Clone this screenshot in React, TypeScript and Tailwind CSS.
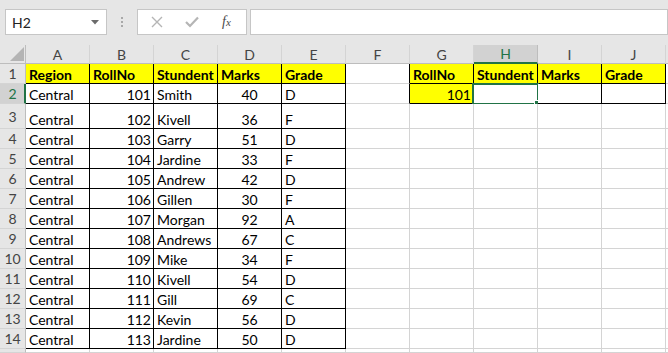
import React from "react";

const COLS = ["A", "B", "C", "D", "E", "F", "G", "H", "I", "J"];
const names = ["Smith", "Kivell", "Garry", "Jardine", "Andrew", "Gillen", "Morgan", "Andrews", "Mike", "Kivell", "Gill", "Kevin", "Jardine"];
const marks = [40, 36, 51, 33, 42, 30, 92, 67, 34, 54, 69, 56, 50];
const grades = ["D", "F", "D", "F", "D", "F", "A", "C", "F", "D", "C", "D", "D"];

type CellData = { text: string; align: "left" | "right" | "center"; bold?: boolean; fill?: string };

function getCell(row: number, col: number): CellData | null {
  if (row === 1) {
    const h: Record<number, string> = { 0: "Region", 1: "RollNo", 2: "Stundent", 3: "Marks", 4: "Grade", 6: "RollNo", 7: "Stundent", 8: "Marks", 9: "Grade" };
    if (h[col] !== undefined) return { text: h[col], align: "left", bold: true, fill: "yellow" };
    return null;
  }
  if (row === 2 && col === 6) return { text: "101", align: "right", fill: "yellow" };
  if (row >= 2 && row <= 14) {
    const i = row - 2;
    if (col === 0) return { text: "Central", align: "left" };
    if (col === 1) return { text: String(101 + i), align: "right" };
    if (col === 2) return { text: names[i], align: "left" };
    if (col === 3) return { text: String(marks[i]), align: "center" };
    if (col === 4) return { text: grades[i], align: "left" };
  }
  return null;
}

function rightBlack(row: number, col: number) {
  if (row >= 1 && row <= 14 && col <= 4) return true;
  if (row >= 1 && row <= 2 && col >= 5 && col <= 9) return true;
  return false;
}
function bottomBlack(row: number, col: number) {
  if (row >= 1 && row <= 14 && col <= 4) return true;
  if (row >= 1 && row <= 2 && col >= 6 && col <= 9) return true;
  return false;
}

export default function App() {
  const rows = Array.from({ length: 15 }, (_, i) => i + 1);
  return (
    <div className="w-[668px] h-[353px] overflow-hidden bg-white relative" style={{ fontFamily: "Lato, 'Liberation Sans', sans-serif" }}>
      {/* formula bar */}
      <div className="h-[45px] bg-[#e6e6e6] flex items-start pt-[9px]">
        <div className="ml-[5px] w-[102px] h-[26px] bg-white border border-[#c6c6c6] flex items-center justify-between pl-[6px] pr-[7px]">
          <span className="text-[14px] text-[#222]">H2</span>
          <svg width="8" height="5" viewBox="0 0 8 5"><path d="M0 0 L8 0 L4 4.5 Z" fill="#6b6b6b" /></svg>
        </div>
        <div className="w-[30px] h-[26px] flex flex-col items-center justify-center gap-[2px]">
          <div className="w-[2px] h-[2px] bg-[#a8a8a8]" />
          <div className="w-[2px] h-[2px] bg-[#a8a8a8]" />
          <div className="w-[2px] h-[2px] bg-[#a8a8a8]" />
        </div>
        <div className="w-[110px] h-[26px] bg-white border border-[#c6c6c6] flex items-center">
          <svg width="12" height="12" viewBox="0 0 12 12" className="ml-[13px]"><path d="M1 1 L11 11 M11 1 L1 11" stroke="#b5b5b5" strokeWidth="1.4" /></svg>
          <svg width="14" height="12" viewBox="0 0 14 12" className="ml-[22px]"><path d="M1 6 L5 10 L13 1.5" stroke="#b5b5b5" strokeWidth="2.2" fill="none" /></svg>
          <span className="ml-[23px] text-[14px] italic text-[#4a4a4a] leading-none" style={{ fontFamily: "'Liberation Serif', serif" }}>f<span className="text-[11px]">x</span></span>
        </div>
        <div className="ml-[3px] flex-1 h-[26px] bg-white border border-[#c6c6c6]" />
      </div>
      {/* grid */}
      <div className="grid grid-cols-[26px_repeat(10,64px)_1fr] grid-rows-[19px_20px_20px_25px_repeat(11,20px)_1fr] h-[308px] text-[14px] leading-none">
        {/* corner */}
        <div className="bg-[#e6e6e6] border-r border-b border-[#bdbdbd] relative">
          <svg width="14" height="14" viewBox="0 0 14 14" className="absolute left-[10px] top-[2px]"><path d="M14 0 L14 14 L0 14 Z" fill="#b4b4b4" /></svg>
        </div>
        {COLS.map((c) => {
          const sel = c === "H";
          return (
            <div
              key={c}
              className={`flex items-center justify-center border-r ${sel ? "bg-[#d2d2d2] text-[#217346] border-b-2 border-b-[#217346] border-r-[#bdbdbd]" : "bg-[#e6e6e6] text-[#444] border-b border-b-[#bdbdbd] border-r-[#d4d4d4]"}`}
            >
              <span className="pt-[1px]">{c}</span>
            </div>
          );
        })}
        <div className="bg-[#e6e6e6] border-b border-[#bdbdbd]" />
        {rows.map((r) => (
          <React.Fragment key={r}>
            <div
              className={`flex items-center justify-center border-b border-b-[#d4d4d4] ${r === 2 ? "bg-[#d2d2d2] text-[#217346] border-r-2 border-r-[#217346]" : "bg-[#e6e6e6] text-[#444] border-r border-r-[#bdbdbd]"}`}
            >
              {r <= 14 && <span className={r === 2 ? "pl-[1px] pt-[1px]" : "pt-[1px]"}>{r}</span>}
            </div>
            {COLS.map((c, ci) => {
              const d = getCell(r, ci);
              const rb = rightBlack(r, ci);
              const bb = bottomBlack(r, ci);
              const isSel = r === 2 && c === "H";
              return (
                <div
                  key={c}
                  className={`relative flex items-end pb-[1px] whitespace-nowrap overflow-visible border-r border-b ${rb ? "border-r-black" : "border-r-[#d4d4d4]"} ${bb ? "border-b-black" : "border-b-[#d4d4d4]"} ${d?.fill === "yellow" ? "bg-[#ffff00]" : "bg-white"} ${d?.align === "right" ? "justify-end pr-[2px]" : d?.align === "center" ? "justify-center" : "justify-start pl-[3px]"} ${d?.bold ? "font-bold" : ""} text-black`}
                >
                  {d?.text}
                  {isSel && (
                    <>
                      <div className="absolute left-[-2px] top-[-1px] w-[67px] h-[22px] border-2 border-[#217346] pointer-events-none" />
                      <div className="absolute right-[-4px] bottom-[-4px] w-[7px] h-[7px] bg-[#217346] border border-white" />
                    </>
                  )}
                </div>
              );
            })}
            <div className="bg-white border-b border-b-[#d4d4d4]" />
          </React.Fragment>
        ))}
      </div>
    </div>
  );
}
